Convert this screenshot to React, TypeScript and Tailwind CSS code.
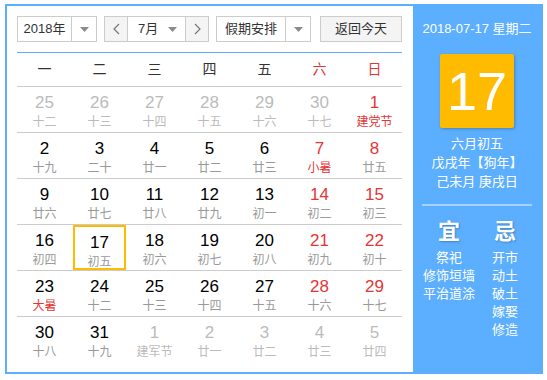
import React from 'react';

type Day = { d: number; l: string; muted?: boolean; red?: boolean; lred?: boolean; sel?: boolean };

const weeks: Day[][] = [
  [
    { d: 25, l: '十二', muted: true },
    { d: 26, l: '十三', muted: true },
    { d: 27, l: '十四', muted: true },
    { d: 28, l: '十五', muted: true },
    { d: 29, l: '十六', muted: true },
    { d: 30, l: '十七', muted: true },
    { d: 1, l: '建党节', red: true, lred: true },
  ],
  [
    { d: 2, l: '十九' },
    { d: 3, l: '二十' },
    { d: 4, l: '廿一' },
    { d: 5, l: '廿二' },
    { d: 6, l: '廿三' },
    { d: 7, l: '小暑', red: true, lred: true },
    { d: 8, l: '廿五', red: true },
  ],
  [
    { d: 9, l: '廿六' },
    { d: 10, l: '廿七' },
    { d: 11, l: '廿八' },
    { d: 12, l: '廿九' },
    { d: 13, l: '初一' },
    { d: 14, l: '初二', red: true },
    { d: 15, l: '初三', red: true },
  ],
  [
    { d: 16, l: '初四' },
    { d: 17, l: '初五', sel: true },
    { d: 18, l: '初六' },
    { d: 19, l: '初七' },
    { d: 20, l: '初八' },
    { d: 21, l: '初九', red: true },
    { d: 22, l: '初十', red: true },
  ],
  [
    { d: 23, l: '大暑', lred: true },
    { d: 24, l: '十二' },
    { d: 25, l: '十三' },
    { d: 26, l: '十四' },
    { d: 27, l: '十五' },
    { d: 28, l: '十六', red: true },
    { d: 29, l: '十七', red: true },
  ],
  [
    { d: 30, l: '十八' },
    { d: 31, l: '十九' },
    { d: 1, l: '建军节', muted: true },
    { d: 2, l: '廿一', muted: true },
    { d: 3, l: '廿二', muted: true },
    { d: 4, l: '廿三', muted: true },
    { d: 5, l: '廿四', muted: true },
  ],
];

const weekdays = ['一', '二', '三', '四', '五', '六', '日'];

function Caret() {
  return (
    <svg width="9" height="5" viewBox="0 0 9 5">
      <path d="M0 0 L9 0 L4.5 5 Z" fill="#8a8a8a" />
    </svg>
  );
}

function Chevron({ dir }: { dir: 'l' | 'r' }) {
  return (
    <svg width="7" height="12" viewBox="0 0 7 12">
      <polyline
        points={dir === 'l' ? '6,1 1,6 6,11' : '1,1 6,6 1,11'}
        fill="none"
        stroke="#777"
        strokeWidth="1.2"
      />
    </svg>
  );
}

export default function App() {
  return (
    <div
      className="ml-[5px] mt-[4px] flex h-[370px] w-[538px] border-2 border-[#5caffe] bg-white text-[13px]"
      style={{ fontFamily: '"Liberation Sans", "Noto Sans CJK SC", sans-serif' }}
    >
      {/* Left: calendar */}
      <div className="w-[406px] pl-[10px] pt-[10px]">
        <div className="flex h-[26px] w-[385px] items-stretch text-[#333]">
          <div className="flex w-[80px] border border-[#ccc]">
            <div className="flex flex-1 items-center justify-center">2018年</div>
            <div className="flex w-[25px] items-center justify-center border-l border-[#ccc]">
              <Caret />
            </div>
          </div>
          <div className="ml-[7px] flex w-[105px] border border-[#ccc]">
            <div className="flex w-[22px] items-center justify-center bg-[#f4f4f4]">
              <Chevron dir="l" />
            </div>
            <div className="flex flex-1 items-center border-x border-[#ccc] pl-[10px] pr-[8px]">
              <span className="flex-1">7月</span>
              <Caret />
            </div>
            <div className="flex w-[22px] items-center justify-center bg-[#f4f4f4]">
              <Chevron dir="r" />
            </div>
          </div>
          <div className="ml-[7px] flex w-[95px] border border-[#ccc]">
            <div className="flex flex-1 items-center justify-center">假期安排</div>
            <div className="flex w-[25px] items-center justify-center border-l border-[#ccc]">
              <Caret />
            </div>
          </div>
          <div className="ml-[9px] flex w-[82px] items-center justify-center border border-[#ccc] bg-[#f4f4f4]">
            返回今天
          </div>
        </div>

        <div className="mt-[10px] w-[385px] border-t border-[#5caffe]">
          <div className="grid h-[34px] grid-cols-7 border-b border-[#ccc] text-[14px]">
            {weekdays.map((w, i) => (
              <div
                key={w}
                className={`flex items-center justify-center ${i >= 5 ? 'text-[#e53535]' : 'text-[#333]'}`}
              >
                {w}
              </div>
            ))}
          </div>
          {weeks.map((row, ri) => (
            <div
              key={ri}
              className={`grid h-[46px] grid-cols-7 ${ri < weeks.length - 1 ? 'border-b border-[#ccc]' : ''}`}
            >
              {row.map((day, di) => (
                <div key={di} className="flex justify-center">
                  <div
                    className={`flex h-[45px] w-[53px] flex-col items-center pt-[6px] ${
                      day.sel ? 'border-2 border-[#ffbb00] pt-[4px]' : ''
                    }`}
                  >
                    <span
                      className={`text-[17px] leading-[20px] ${
                        day.muted ? 'text-[#bbb]' : day.red ? 'text-[#e53535]' : 'text-black'
                      }`}
                    >
                      {day.d}
                    </span>
                    <span
                      className={`text-[12px] leading-[18px] ${
                        day.muted ? 'text-[#bbb]' : day.lred ? 'text-[#e53535]' : 'text-[#999]'
                      }`}
                    >
                      {day.l}
                    </span>
                  </div>
                </div>
              ))}
            </div>
          ))}
        </div>
      </div>

      {/* Right: today panel */}
      <div className="flex flex-1 flex-col items-center bg-[#5caffe] pt-[15px] text-white">
        <div className="text-[13px] leading-[16px]">2018-07-17 星期二</div>
        <div className="mt-[17px] flex h-[74px] w-[74px] items-center justify-center rounded-[2px] bg-[#ffbb00] text-[54px] leading-none shadow-[1px_1px_3px_rgba(0,0,0,0.25)]">
          17
        </div>
        <div className="mt-[6px] text-[13px] leading-[19px]">六月初五</div>
        <div className="text-[13px] leading-[19px]">戊戌年【狗年】</div>
        <div className="text-[13px] leading-[20px]">己未月 庚戌日</div>
        <div className="mt-[12px] h-[2px] w-[110px] bg-[#a6d1fc]" />
        <div className="mt-[13px] flex">
          <div className="flex w-[56px] flex-col items-center">
            <div className="text-[22px] font-bold leading-[26px] [text-shadow:1px_1px_2px_rgba(0,0,0,0.25)]">宜</div>
            <div className="mt-[4px] flex flex-col items-center text-[13px] leading-[18px]">
              <span>祭祀</span>
              <span>修饰垣墙</span>
              <span>平治道涂</span>
            </div>
          </div>
          <div className="flex w-[56px] flex-col items-center">
            <div className="text-[22px] font-bold leading-[26px] [text-shadow:1px_1px_2px_rgba(0,0,0,0.25)]">忌</div>
            <div className="mt-[4px] flex flex-col items-center text-[13px] leading-[18px]">
              <span>开市</span>
              <span>动土</span>
              <span>破土</span>
              <span>嫁娶</span>
              <span>修造</span>
            </div>
          </div>
        </div>
      </div>
    </div>
  );
}
